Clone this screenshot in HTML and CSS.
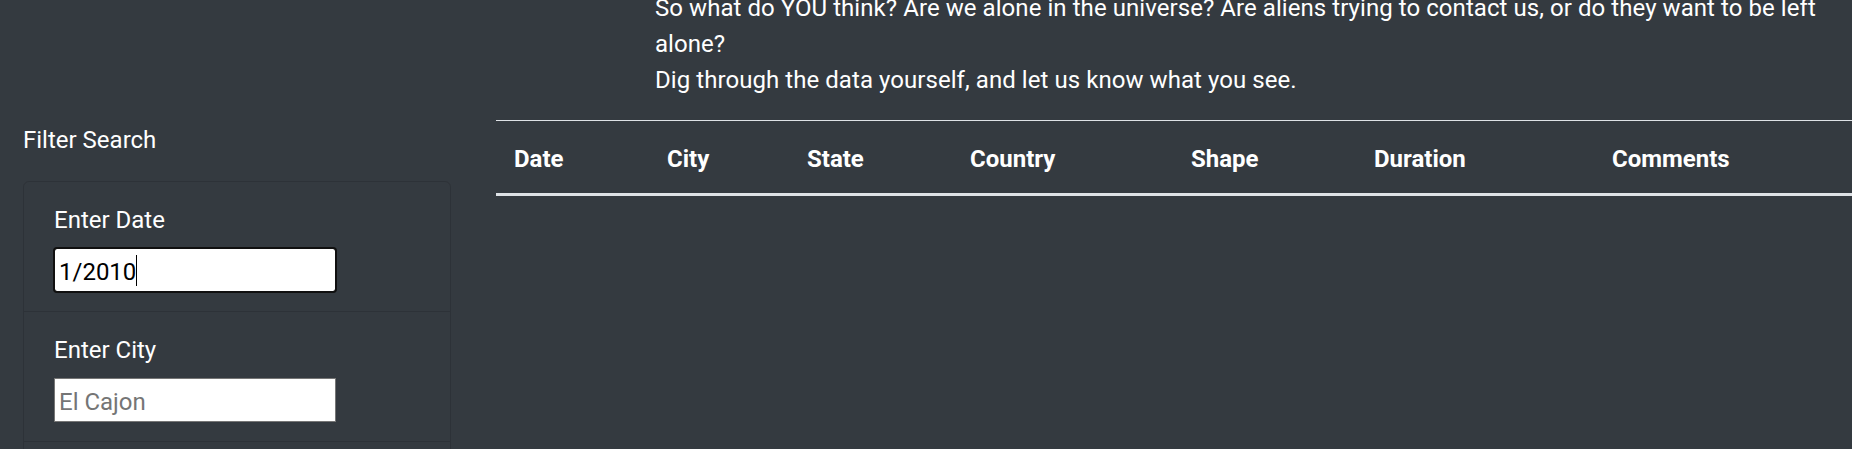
FILE: index.html
```html
<!DOCTYPE html>
<html lang="en">
<head>
<meta charset="utf-8">
<title>UFO Sightings</title>
<link rel="stylesheet" href="styles.css">
</head>
<body>
  <header class="intro">
    <p class="intro-text">So what do YOU think? Are we alone in the universe? Are aliens trying to contact us, or do they want to be left<br>alone?<br>Dig through the data yourself, and let us know what you see.</p>
  </header>
  <div class="row">
    <aside class="filters">
      <p class="filter-title">Filter Search</p>
      <div class="card">
        <ul class="filter-list">
          <li class="filter-item">
            <label class="filter-label" for="datetime">Enter Date</label>
            <span class="input-wrap">
              <input class="filter-input is-focused" id="datetime" type="text" value="1/2010">
              <span class="caret"></span>
            </span>
          </li>
          <li class="filter-item">
            <label class="filter-label" for="city">Enter City</label>
            <span class="input-wrap">
              <input class="filter-input" id="city" type="text" placeholder="El Cajon">
            </span>
          </li>
          <li class="filter-item">
            <label class="filter-label" for="state">Enter State</label>
            <span class="input-wrap">
              <input class="filter-input" id="state" type="text" placeholder="CA">
            </span>
          </li>
        </ul>
      </div>
    </aside>
    <main class="results">
      <table class="ufo-table">
        <colgroup>
          <col class="c-date"><col class="c-city"><col class="c-state"><col class="c-country"><col class="c-shape"><col class="c-duration"><col class="c-comments">
        </colgroup>
        <thead>
          <tr>
            <th>Date</th>
            <th>City</th>
            <th>State</th>
            <th>Country</th>
            <th>Shape</th>
            <th>Duration</th>
            <th>Comments</th>
          </tr>
        </thead>
        <tbody></tbody>
      </table>
    </main>
  </div>
</body>
</html>
```
FILE: styles.css
```css
* { box-sizing: border-box; }

html, body {
  margin: 0;
  padding: 0;
  overflow: hidden;
}

body {
  background: #343a40;
  color: #ffffff;
  font-family: "Segoe UI", Roboto, "Liberation Sans", sans-serif;
  font-size: 24px;
  line-height: 36px;
}

.intro {
  margin-top: -10px;
  padding-left: 655px;
}

.intro-text {
  margin: 0 0 22px 0;
  white-space: nowrap;
  letter-spacing: 0.06px;
}

.row {
  display: flex;
  align-items: flex-start;
}

.filters {
  flex: 0 0 474px;
  padding: 0 23px;
}

.filter-title {
  margin: 0 0 23px 0;
  padding-top: 2px;
}

.card {
  border: 1px solid rgba(0, 0, 0, 0.125);
  border-radius: 6px;
  width: 428px;
}

.filter-list {
  list-style: none;
  margin: 0;
  padding: 0;
}

.filter-item {
  display: flex;
  flex-direction: column;
  align-items: flex-start;
  padding: 18px 30px 19px 30px;
  border-bottom: 1px solid rgba(0, 0, 0, 0.125);
}

.filter-label {
  display: block;
  padding-top: 2px;
  margin-bottom: 10px;
}

.input-wrap {
  position: relative;
  display: block;
}

.filter-input {
  display: block;
  width: 282px;
  height: 44px;
  margin: 0;
  padding: 4px 3px 0 4px;
  border: 1px solid #767676;
  background: #ffffff;
  color: #000000;
  font-family: inherit;
  font-size: 24px;
  line-height: 36px;
}

.filter-input::placeholder {
  color: #757575;
}

.filter-input.is-focused {
  outline: 2px solid #101010;
  outline-offset: -1px;
  border-radius: 3px;
}

.caret {
  position: absolute;
  left: 82px;
  top: 7px;
  width: 1px;
  height: 31px;
  background: #000000;
}

.results {
  flex: 1 1 auto;
  padding-left: 22px;
}

.ufo-table {
  width: 100%;
  border-collapse: collapse;
  table-layout: fixed;
}

.c-date { width: 153px; }
.c-city { width: 140px; }
.c-state { width: 163px; }
.c-country { width: 221px; }
.c-shape { width: 183px; }
.c-duration { width: 238px; }

.ufo-table th {
  text-align: left;
  font-weight: 700;
  padding: 20px 18px 16px 18px;
  line-height: 36px;
  border-top: 1px solid #dee2e6;
  border-bottom: 3px solid #dee2e6;
  white-space: nowrap;
}
```
